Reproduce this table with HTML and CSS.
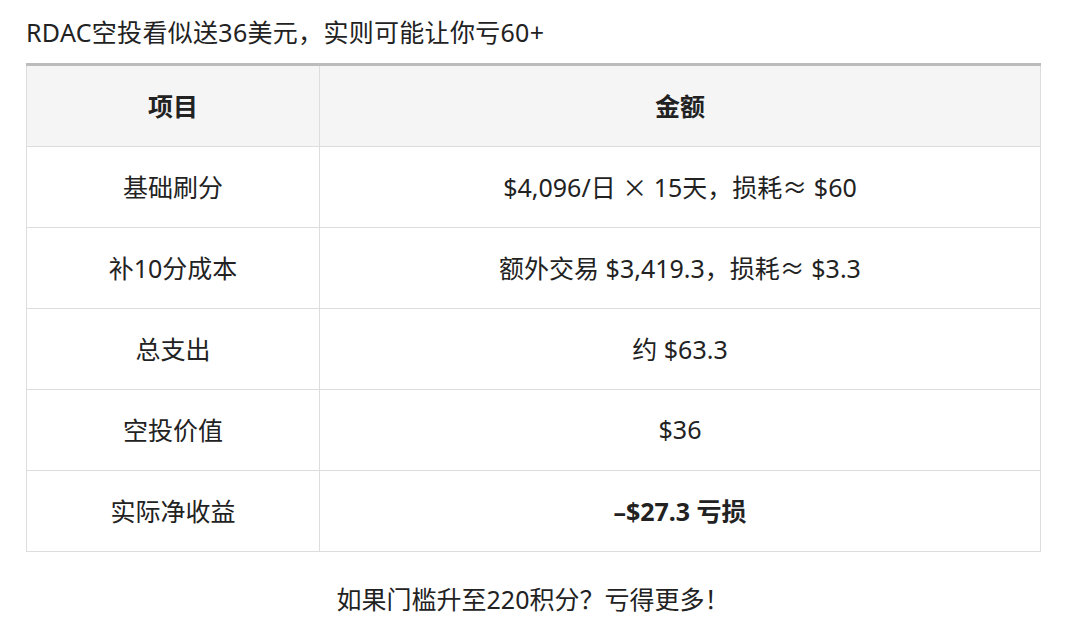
FILE: index.html
```html
<!DOCTYPE html>
<html lang="zh-CN">
<head>
<meta charset="utf-8">
<link rel="stylesheet" href="styles.css">
</head>
<body>
<div class="page">
  <p class="title">RDAC空投看似送36美元，实则可能让你亏60+</p>
  <table class="cost">
    <thead>
      <tr><th class="col-item">项目</th><th>金额</th></tr>
    </thead>
    <tbody>
      <tr><td>基础刷分</td><td>$4,096/日 <span class="cjk">×</span> 15天，损耗≈ $60</td></tr>
      <tr><td>补10分成本</td><td>额外交易 $3,419.3，损耗≈ $3.3</td></tr>
      <tr><td>总支出</td><td>约 $63.3</td></tr>
      <tr><td>空投价值</td><td>$36</td></tr>
      <tr><td>实际净收益</td><td><strong>–$27.3 亏损</strong></td></tr>
    </tbody>
  </table>
  <p class="footer">如果门槛升至220积分？亏得更多！</p>
</div>
</body>
</html>
```
FILE: styles.css
```css
html, body {
  margin: 0;
  padding: 0;
  background: #ffffff;
}
body {
  font-family: "Noto Sans", "Noto Sans CJK SC", sans-serif;
  color: #222222;
}
.page {
  padding: 0 25px 0 26px;
}
.title {
  margin: 0;
  padding-top: 16px;
  font-size: 25px;
  line-height: 32px;
  height: 47px;
  letter-spacing: 0.3px;
}
.cost {
  width: 1015px;
  border-collapse: collapse;
  border-top: 3px solid #bcbcbc;
  font-size: 25px;
}
.cost th, .cost td {
  border: 1px solid #dddddd;
  height: 81px;
  padding: 0 10px 2px;
  text-align: center;
  vertical-align: middle;
  box-sizing: border-box;
}
.cost thead th {
  height: 82px;
  border-top: none;
  background: #f5f5f5;
  font-weight: 700;
}
.cost .col-item {
  width: 293px;
}
.cost strong {
  font-weight: 700;
}
.cjk {
  font-family: "Noto Sans CJK SC", sans-serif;
}
.footer {
  margin: 0;
  padding-top: 29px;
  text-align: center;
  font-size: 25px;
  line-height: 36px;
}
```
